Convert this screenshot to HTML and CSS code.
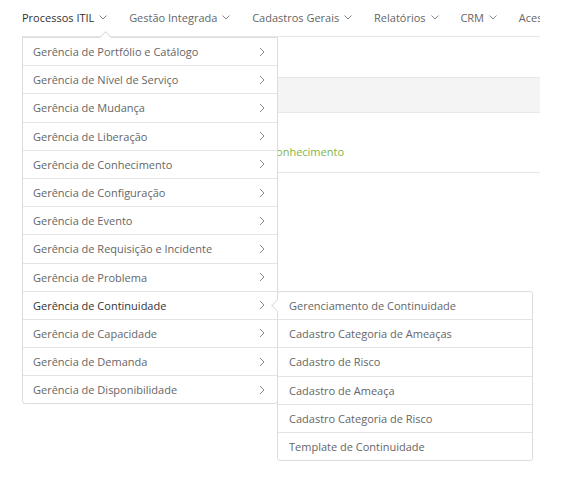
FILE: index.html
```html
<!DOCTYPE html>
<html lang="pt-BR">
<head>
<meta charset="utf-8">
<link rel="stylesheet" href="styles.css">
</head>
<body>
<div class="page">
  <nav class="topnav">
    <div class="nav-item active">Processos ITIL <svg class="down" viewBox="0 0 8 5"><path d="M0.5 0.5l3.5 3.5 3.5-3.5"/></svg></div>
    <div class="nav-item">Gestão Integrada <svg class="down" viewBox="0 0 8 5"><path d="M0.5 0.5l3.5 3.5 3.5-3.5"/></svg></div>
    <div class="nav-item">Cadastros Gerais <svg class="down" viewBox="0 0 8 5"><path d="M0.5 0.5l3.5 3.5 3.5-3.5"/></svg></div>
    <div class="nav-item">Relatórios <svg class="down" viewBox="0 0 8 5"><path d="M0.5 0.5l3.5 3.5 3.5-3.5"/></svg></div>
    <div class="nav-item">CRM <svg class="down" viewBox="0 0 8 5"><path d="M0.5 0.5l3.5 3.5 3.5-3.5"/></svg></div>
    <div class="nav-item">Aces</div>
  </nav>
  <div class="content">
    <div class="band"></div>
    <div class="section"><span class="green">Base de Conhecimento</span></div>
  </div>

  <div class="menu">
    <span class="notch-up"></span>
    <ul>
      <li>Gerência de Portfólio e Catálogo<svg class="right" viewBox="0 0 6 10"><path d="M1 1l4 4-4 4"/></svg></li>
      <li>Gerência de Nível de Serviço<svg class="right" viewBox="0 0 6 10"><path d="M1 1l4 4-4 4"/></svg></li>
      <li>Gerência de Mudança<svg class="right" viewBox="0 0 6 10"><path d="M1 1l4 4-4 4"/></svg></li>
      <li>Gerência de Liberação<svg class="right" viewBox="0 0 6 10"><path d="M1 1l4 4-4 4"/></svg></li>
      <li>Gerência de Conhecimento<svg class="right" viewBox="0 0 6 10"><path d="M1 1l4 4-4 4"/></svg></li>
      <li>Gerência de Configuração<svg class="right" viewBox="0 0 6 10"><path d="M1 1l4 4-4 4"/></svg></li>
      <li>Gerência de Evento<svg class="right" viewBox="0 0 6 10"><path d="M1 1l4 4-4 4"/></svg></li>
      <li>Gerência de Requisição e Incidente<svg class="right" viewBox="0 0 6 10"><path d="M1 1l4 4-4 4"/></svg></li>
      <li>Gerência de Problema<svg class="right" viewBox="0 0 6 10"><path d="M1 1l4 4-4 4"/></svg></li>
      <li class="current">Gerência de Continuidade<svg class="right" viewBox="0 0 6 10"><path d="M1 1l4 4-4 4"/></svg></li>
      <li>Gerência de Capacidade<svg class="right" viewBox="0 0 6 10"><path d="M1 1l4 4-4 4"/></svg></li>
      <li>Gerência de Demanda<svg class="right" viewBox="0 0 6 10"><path d="M1 1l4 4-4 4"/></svg></li>
      <li>Gerência de Disponibilidade<svg class="right" viewBox="0 0 6 10"><path d="M1 1l4 4-4 4"/></svg></li>
    </ul>
  </div>

  <div class="submenu">
    <span class="notch-left"></span>
    <ul>
      <li>Gerenciamento de Continuidade</li>
      <li>Cadastro Categoria de Ameaças</li>
      <li>Cadastro de Risco</li>
      <li>Cadastro de Ameaça</li>
      <li>Cadastro Categoria de Risco</li>
      <li>Template de Continuidade</li>
    </ul>
  </div>
</div>
</body>
</html>
```
FILE: styles.css
```css
* { box-sizing: border-box; }
html, body { margin: 0; padding: 0; background: #fff; }
body {
  font-family: "Open Sans", "Noto Sans", sans-serif;
  font-size: 11px;
  color: #666;
}
.page {
  position: relative;
  width: 562px;
  height: 478px;
  overflow: hidden;
}
.topnav {
  margin-left: 22px;
  width: 518px;
  height: 37px;
  border-bottom: 1px solid #e6e6e6;
  display: flex;
  align-items: center;
  gap: 21.8px;
  white-space: nowrap;
  overflow: hidden;
  padding-bottom: 1px;
}
.nav-item {
  display: flex;
  align-items: center;
  gap: 5px;
  color: #666;
  flex: none;
}
.nav-item.active { color: #333; }
.down {
  width: 8px;
  height: 5px;
  fill: none;
  stroke: #888;
  stroke-width: 1;
}
.content {
  margin-left: 22px;
  width: 518px;
  padding-top: 40px;
}
.band {
  height: 36px;
  background: #f4f4f4;
  border-top: 1px solid #e8e8e8;
  border-bottom: 1px solid #e8e8e8;
}
.section {
  height: 60px;
  border-bottom: 1px solid #e6e6e6;
  padding-top: 31px;
  line-height: 16px;
}
.green {
  display: inline-block;
  width: 322px;
  text-align: right;
  color: #7fb446;
}

.menu, .submenu {
  position: absolute;
  background: #fff;
  border: 1px solid #dcdcdc;
  width: 256px;
}
.menu {
  left: 22px;
  top: 37px;
  border-radius: 0 0 3px 3px;
}
.submenu {
  left: 277px;
  top: 291px;
  border-radius: 3px;
}
ul { list-style: none; margin: 0; padding: 0; }
li {
  height: 28.2px;
  padding: 0 10px;
  border-bottom: 1px solid #e4e4e4;
  display: flex;
  align-items: center;
  justify-content: space-between;
  white-space: nowrap;
}
li:last-child { border-bottom: none; height: 27.2px; }
.submenu li { padding-left: 11px; }
li.current { color: #333; }
.right {
  width: 6px;
  height: 10px;
  fill: none;
  stroke: #888;
  stroke-width: 1;
  margin-right: 2px;
}
.notch-up {
  position: absolute;
  left: 78px;
  top: -5px;
  width: 9px;
  height: 9px;
  background: #fff;
  border-top: 1px solid #dcdcdc;
  border-left: 1px solid #dcdcdc;
  transform: rotate(45deg);
}
.notch-left {
  position: absolute;
  left: -5px;
  top: 9px;
  width: 9px;
  height: 9px;
  background: #fff;
  border-bottom: 1px solid #dcdcdc;
  border-left: 1px solid #dcdcdc;
  transform: rotate(45deg);
}
```
